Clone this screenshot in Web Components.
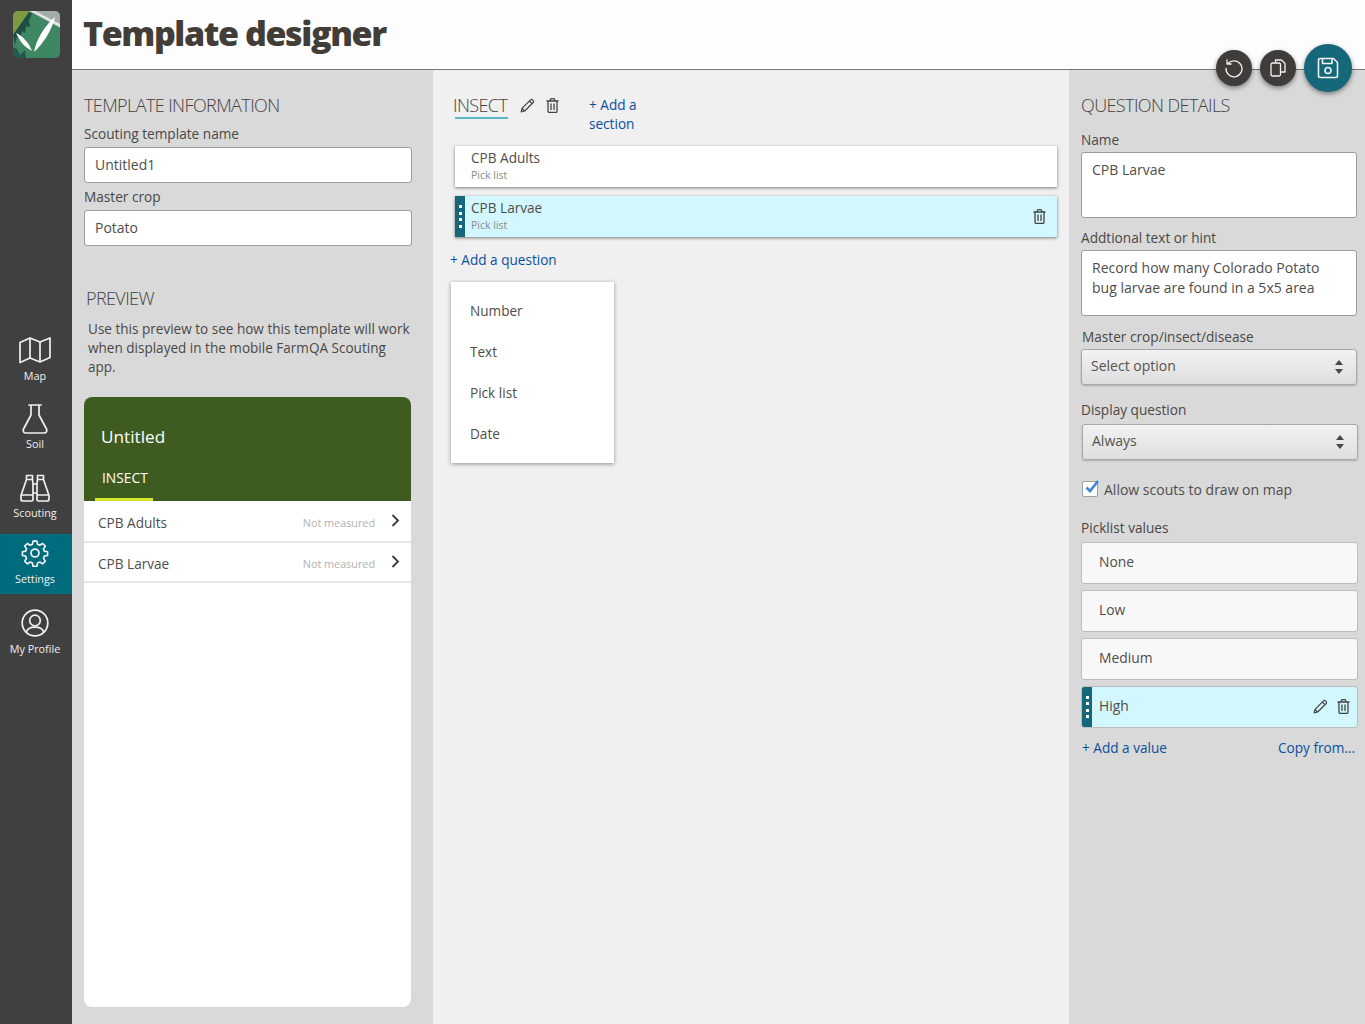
<!DOCTYPE html>
<html lang="en">
<head>
<meta charset="utf-8">
<title>Template designer</title>
<style>
  html, body { margin: 0; height: 100%; }
  body { font-family: "Open Sans", "Liberation Sans", sans-serif; color: #4a4845; overflow: hidden; }
  #app { display: grid; grid-template-columns: 72px 1fr; width: 1365px; height: 1024px; }
  #main { display: grid; grid-template-rows: 70px 1fr; position: relative; min-width: 0; }
  #columns { display: grid; grid-template-columns: 361px 636px 296px; min-height: 0; }
</style>
</head>
<body>
<div id="app">
  <app-sidebar></app-sidebar>
  <div id="main">
    <app-header>Template designer</app-header>
    <div id="columns">
      <template-info></template-info>
      <section-editor></section-editor>
      <question-details></question-details>
    </div>
  </div>
</div>

<script>
const ICONS = {
  map: '<svg width="34" height="28" viewBox="0 0 34 28" fill="none" stroke="currentColor" stroke-width="1.7" stroke-linejoin="round"><path d="M2 6.5 12 2l10 4 10-4v19.5L22 26l-10-4-10 4.500z"/><path d="M12 2v20M22 6v20"/></svg>',
  flask: '<svg width="28" height="32" viewBox="0 0 28 32" fill="none" stroke="currentColor" stroke-width="1.700" stroke-linejoin="round" stroke-linecap="round"><path d="M8 2h12M10 2v10L2.500 26c-1 2 .3 4 2.500 4h18c2.200 0 3.500-2 2.500-4L18 12V2"/></svg>',
  binoculars: '<svg width="30" height="28" viewBox="0 0 30 28" fill="none" stroke="currentColor" stroke-width="1.700" stroke-linejoin="round"><path d="M6.500 1.500h6v4h-6zM17.500 1.500h6v4h-6zM12.500 5.500 13 10v15.500c0 .9-.6 1.500-1.500 1.500H3c-1.300 0-2-.8-2-2v-3.500L6.500 5.500M17.500 5.500 17 10v15.500c0 .9.600 1.500 1.500 1.500H27c1.300 0 2-.8 2-2v-3.500L23.500 5.500M13 10h4M13 19h4M1.500 21h11M17.500 21h11"/></svg>',
  gear: '<svg width="28" height="28" viewBox="0 0 24 24" fill="none" stroke="currentColor" stroke-width="1.500" stroke-linejoin="round"><circle cx="12" cy="12" r="3.400"/><path d="M10.200 1.500h3.600l.6 3 2 .9 2.600-1.700 2.500 2.500-1.700 2.600.8 2 3 .6v3.400l-3 .6-.8 2 1.700 2.600-2.500 2.500-2.600-1.700-2 .9-.6 3h-3.600l-.6-3-2-.9-2.600 1.700-2.500-2.500 1.700-2.600-.8-2-3-.6v-3.400l3-.6.8-2-1.700-2.600 2.500-2.500 2.600 1.700 2-.9z" transform="translate(12 12) scale(.93) translate(-12 -12.500)"/></svg>',
  profile: '<svg width="28" height="28" viewBox="0 0 28 28" fill="none" stroke="currentColor" stroke-width="1.700"><circle cx="14" cy="14" r="12.800"/><circle cx="14" cy="11.500" r="5.300"/><path d="M5.200 23.200c1-3.300 4-5 8.800-5s7.800 1.700 8.800 5"/></svg>',
  pencil: '<svg width="15" height="15" viewBox="0 0 15 15" fill="none" stroke="currentColor" stroke-width="1.200" stroke-linejoin="round"><path d="M1.200 13.800 2 10.300 10.500 1.800a1.300 1.300 0 0 1 1.800 0l.9.900a1.300 1.300 0 0 1 0 1.800L4.700 13zM9.300 3l2.700 2.700M2 10.300 4.700 13"/></svg>',
  trash: '<svg width="13" height="15" viewBox="0 0 13 15" fill="none" stroke="currentColor" stroke-width="1.300"><path d="M.5 3h12M2 3v10.200c0 .7.500 1.200 1.200 1.200h6.600c.7 0 1.200-.5 1.200-1.200V3M4.300 3V1.700c0-.6.400-1 1-1h2.400c.6 0 1 .4 1 1V3M5 5.500v6.500M8 5.500v6.500"/></svg>',
  undo: '<svg width="20" height="20" viewBox="0 0 20 20" fill="none" stroke="currentColor" stroke-width="1.300" stroke-linecap="round" stroke-linejoin="round"><path d="M4 5.500A8 8 0 1 1 2 10.500M3 1.800v4.200h4.200"/></svg>',
  copy: '<svg width="16" height="18" viewBox="0 0 16 18" fill="none" stroke="currentColor" stroke-width="1.300" stroke-linejoin="round"><path d="M5.500 3.500V1h6l3.500 3.500V13h-4"/><rect x="1" y="4" width="9.500" height="13" rx="1.500"/></svg>',
  save: '<svg width="22" height="22" viewBox="0 0 22 22" fill="none" stroke="currentColor" stroke-width="1.600" stroke-linejoin="round"><path d="M1.500 3c0-.8.700-1.500 1.500-1.500h13.500l4 4V19c0 .8-.7 1.500-1.500 1.500H3c-1.300 0-1.500-.7-1.500-1.500z"/><path d="M5.500 1.500v5h9.500v-5"/><circle cx="11" cy="13.500" r="3"/></svg>',
  chevron: '<svg width="9" height="13" viewBox="0 0 9 13" fill="none" stroke="#3c3a38" stroke-width="1.800"><path d="M1.500 1l5.500 5.500L1.500 12"/></svg>'
}

/**
 * Defines a custom element that only renders a fixed shadow tree.
 *
 * @param {string} name - The tag name.
 * @param {string} html - The shadow markup, styles included.
 */
function defineStatic (name, html) {
  const template = document.createElement('template')
  template.innerHTML = html
  customElements.define(name, class extends HTMLElement {
    constructor () {
      super()
      this.attachShadow({ mode: 'open' }).appendChild(template.content.cloneNode(true))
    }
  })
}

customElements.define('nav-item', class extends HTMLElement {
  constructor () {
    super()
    this.attachShadow({ mode: 'open' }).innerHTML = `
      <style>
        :host { display: flex; flex-direction: column; align-items: center; box-sizing: border-box; height: 60px; padding-right: 2px; color: #f0f0f0; font-size: 10.800px; line-height: 15px; }
        :host([active]) { background: #006b7c; }
        :host([tight]) .icon { height: 36px; }
        .icon { height: 37px; display: flex; align-items: center; justify-content: center; padding-top: 1px; box-sizing: border-box; }
      </style>
      <div class="icon">${ICONS[this.getAttribute('icon')]}</div>
      <slot></slot>`
  }
})

defineStatic('app-sidebar', `
  <style>
    :host { display: flex; flex-direction: column; background: #404040; }
    svg.logo { display: block; margin: 11px 0 0 13px; border-radius: 5px; }
    nav { display: flex; flex-direction: column; margin-top: 273px; }
    nav-item:nth-child(2), nav-item:nth-child(3) { margin-top: 9px; }
    nav-item:nth-child(4) { margin-top: 5px; }
    nav-item:nth-child(5) { margin-top: 10px; }
  </style>
  <svg class="logo" width="47" height="47" viewBox="0 0 47 47">
    <rect width="47" height="47" fill="#3f8763"/>
    <path d="M0 0h17L0 24z" fill="#7c9a42"/>
    <path d="M16 0h31v17z" fill="#a3aba7"/>
    <path d="M17 0h5l25 13v3z" fill="#e2e8e3"/>
    <path d="M0 24 16 1l3 2-3 6 1 7-4-1-1 7-3-2-2 9-3-3-2 8z" fill="#1d4f45"/>
    <path d="M0 36l4 2 3 6 5-5 1 8H0z" fill="#25594f"/>
    <path d="M3 22c7 3 13 10 16 18C11 36 6 29 3 22z" fill="#fff"/>
    <path d="M42 6c-3 13-12 27-21 35 2-12 11-27 21-35z" fill="#fff"/>
  </svg>
  <nav>
    <nav-item icon="map">Map</nav-item>
    <nav-item icon="flask" tight>Soil</nav-item>
    <nav-item icon="binoculars" tight>Scouting</nav-item>
    <nav-item icon="gear" active>Settings</nav-item>
    <nav-item icon="profile">My Profile</nav-item>
  </nav>
`)

customElements.define('round-button', class extends HTMLElement {
  constructor () {
    super()
    this.attachShadow({ mode: 'open' }).innerHTML = `
      <style>
        :host { display: flex; align-items: center; justify-content: center; width: 36px; height: 36px; border-radius: 50%; background: #3f3c3a; color: #f2f2f2; box-shadow: 0 2px 5px rgba(0,0,0,.45); }
        :host([primary]) { width: 48px; height: 48px; background: #14687a; }
      </style>
      ${ICONS[this.getAttribute('icon')]}`
  }
})

defineStatic('app-header', `
  <style>
    :host { display: flex; align-items: center; box-sizing: border-box; height: 70px; padding: 0 0 4px 11px; background: #fdfdfd; border-bottom: 1px solid #777; }
    h1 { margin: 0; font-size: 34px; font-weight: 800; color: #423d37; letter-spacing: -1.400px; }
    .actions { position: absolute; top: 44px; right: 13px; display: flex; align-items: center; gap: 8px; z-index: 2; }
  </style>
  <h1><slot></slot></h1>
  <div class="actions">
    <round-button icon="undo"></round-button>
    <round-button icon="copy"></round-button>
    <round-button icon="save" primary></round-button>
  </div>
`)

defineStatic('panel-heading', `
  <style>
    :host { display: block; font-size: 18px; font-weight: 300; line-height: 24px; letter-spacing: -.6px; color: #45423f; }
  </style>
  <slot></slot>
`)

defineStatic('field-label', `
  <style>
    :host { display: block; font-size: 13.650px; line-height: 19px; color: #4a4845; }
  </style>
  <slot></slot>
`)

defineStatic('text-box', `
  <style>
    :host { display: block; box-sizing: border-box; background: #fff; border: 1px solid #9c9c9c; border-radius: 3px; padding: 7px 10px; font-size: 14px; line-height: 20px; color: #4f4d4b; }
  </style>
  <slot></slot>
`)

defineStatic('select-box', `
  <style>
    :host { display: flex; align-items: center; justify-content: space-between; box-sizing: border-box; height: 36px; padding: 0 13px 3px 9px; background: linear-gradient(#f2f2f2, #dedede); border: 1px solid #a8a8a8; border-radius: 3px; box-shadow: 0 1px 2px rgba(0,0,0,.2); font-size: 14px; color: #55534f; }
    .arrows { display: flex; flex-direction: column; gap: 4px; margin-top: 3px; }
    i { display: block; width: 0; border-left: 4.500px solid transparent; border-right: 4.500px solid transparent; }
    i.up { border-bottom: 5px solid #4a4845; }
    i.down { border-top: 5px solid #4a4845; }
  </style>
  <span><slot></slot></span>
  <span class="arrows"><i class="up"></i><i class="down"></i></span>
`)

const GRIP = `<div class="grip"><b></b><b></b><b></b><b></b></div>`
const GRIP_STYLE = `
  .grip { position: absolute; left: 0; top: 0; bottom: 0; width: 10px; background: #14687a; display: flex; flex-direction: column; align-items: center; justify-content: center; gap: 3.500px; }
  .grip b { width: 3px; height: 3px; background: #fff; }
`

customElements.define('question-row', class extends HTMLElement {
  constructor () {
    super()
    const active = this.hasAttribute('active')
    this.attachShadow({ mode: 'open' }).innerHTML = `
      <style>
        :host { display: block; position: relative; box-sizing: border-box; height: 41px; padding: 2px 16px 0; background: #fff; box-shadow: 0 1px 3px rgba(0,0,0,.5); }
        :host([active]) { background: #d2f7ff; }
        .name { font-size: 13.600px; line-height: 20px; color: #4f4d4b; }
        .type { font-size: 10.500px; line-height: 15px; color: #8a8a8a; }
        .trash { position: absolute; right: 11px; top: 13px; color: #444; line-height: 0; }
        ${GRIP_STYLE}
      </style>
      ${active ? GRIP : ''}
      <div class="name"><slot></slot></div>
      <div class="type">Pick list</div>
      ${active ? `<span class="trash">${ICONS.trash}</span>` : ''}`
  }
})

customElements.define('value-row', class extends HTMLElement {
  constructor () {
    super()
    const active = this.hasAttribute('active')
    this.attachShadow({ mode: 'open' }).innerHTML = `
      <style>
        :host { display: flex; align-items: center; justify-content: space-between; position: relative; box-sizing: border-box; height: 42px; padding: 0 7px 4px 17px; background: #f8f8f8; border: 1px solid #bdbdbd; border-radius: 3px; font-size: 13.850px; color: #4f4d4b; overflow: hidden; }
        :host([active]) { background: #d2f7ff; }
        .tools { display: flex; align-items: center; gap: 9px; color: #444; margin-top: 2px; }
        ${GRIP_STYLE}
      </style>
      ${active ? GRIP : ''}
      <span><slot></slot></span>
      ${active ? `<span class="tools">${ICONS.pencil}${ICONS.trash}</span>` : ''}`
  }
})

customElements.define('preview-row', class extends HTMLElement {
  constructor () {
    super()
    this.attachShadow({ mode: 'open' }).innerHTML = `
      <style>
        :host { display: flex; align-items: center; box-sizing: border-box; height: 42px; padding: 2px 11px 0 14px; border-bottom: 2px solid #e8e8e8; font-size: 13.600px; color: #4f4d4b; }
        .name { flex: 1; }
        .status { font-size: 10.800px; color: #b2b2b2; margin-right: 16px; }
        svg { display: block; margin-top: -3px; }
      </style>
      <span class="name"><slot></slot></span>
      <span class="status">Not measured</span>
      ${ICONS.chevron}`
  }
})

defineStatic('preview-card', `
  <style>
    :host { display: block; height: 610px; margin-right: 1px; background: #fff; border-radius: 8px; overflow: hidden; }
    header { position: relative; height: 104px; background: #3f5c20; color: #fff; box-sizing: border-box; padding: 27px 0 0 17px; }
    .title { font-size: 17.200px; line-height: 26px; font-weight: 500; }
    .tab { position: absolute; left: 11px; bottom: 0; width: 58px; height: 34px; box-sizing: border-box; border-bottom: 3px solid #d9e52a; padding-left: 7px; font-size: 13.800px; line-height: 22px; }
    preview-row:last-child { height: 40px; }
  </style>
  <header>
    <div class="title">Untitled</div>
    <div class="tab">INSECT</div>
  </header>
  <preview-row>CPB Adults</preview-row>
  <preview-row>CPB Larvae</preview-row>
`)

defineStatic('template-info', `
  <style>
    :host { display: block; box-sizing: border-box; padding: 23px 21px 0 12px; background: #d9d9d9; }
    field-label { margin-top: 7px; }
    .crop { margin-top: 4px; }
    text-box { height: 36px; margin-top: 4px; }
    .preview { margin: 40px 0 0 2px; }
    p { margin: 10px 0 20px 4px; font-size: 13.550px; line-height: 19px; color: #4a4845; }
  </style>
  <panel-heading>TEMPLATE INFORMATION</panel-heading>
  <field-label>Scouting template name</field-label>
  <text-box>Untitled1</text-box>
  <field-label class="crop">Master crop</field-label>
  <text-box>Potato</text-box>
  <panel-heading class="preview">PREVIEW</panel-heading>
  <p>Use this preview to see how this template will work when displayed in the mobile FarmQA Scouting app.</p>
  <preview-card></preview-card>
`)

defineStatic('type-menu', `
  <style>
    :host { display: block; box-sizing: border-box; width: 163px; height: 181px; padding-top: 8px; background: #fff; box-shadow: 0 1px 4px rgba(0,0,0,.4); font-size: 13.600px; color: #4f4d4b; }
    div { height: 41px; line-height: 41px; padding-left: 19px; }
  </style>
  <div>Number</div>
  <div>Text</div>
  <div>Pick list</div>
  <div>Date</div>
`)

defineStatic('section-editor', `
  <style>
    :host { display: block; box-sizing: border-box; padding: 23px 12px 0 20px; background: #f0f0f0; }
    .top { display: flex; align-items: flex-start; height: 53px; }
    .tab { position: relative; width: 55px; flex: none; }
    .tab::after { content: ""; position: absolute; left: 2px; right: 0; top: 24px; height: 2px; background: #5ab5c5; }
    .tools { display: flex; align-items: center; gap: 11px; margin: 5px 0 0 12px; color: #444; }
    a { color: #0b4f9e; font-size: 13.600px; line-height: 19px; text-decoration: none; }
    .add-section { width: 60px; flex: none; margin: 2px 0 0 30px; }
    question-row { margin: 0 0 9px 2px; }
    .add-question { display: block; margin: 13px 0 0 -3px; }
    type-menu { margin: 13px 0 0 -2px; }
  </style>
  <div class="top">
    <panel-heading class="tab">INSECT</panel-heading>
    <div class="tools">${ICONS.pencil}${ICONS.trash}</div>
    <a class="add-section">+ Add a section</a>
  </div>
  <question-row>CPB Adults</question-row>
  <question-row active>CPB Larvae</question-row>
  <a class="add-question">+ Add a question</a>
  <type-menu></type-menu>
`)

defineStatic('question-details', `
  <style>
    :host { display: block; box-sizing: border-box; padding: 23px 8px 0 12px; background: #d9d9d9; }
    field-label { height: 19px; }
    text-box { height: 66px; }
    .check { display: flex; align-items: center; gap: 6px; height: 20px; margin: 19px 0 0 0; font-size: 14px; color: #4f4d4b; }
    .box { position: relative; width: 16px; height: 16px; margin-left: 1px; box-sizing: border-box; background: #fff; border: 1px solid #a0a0a0; border-radius: 2px; }
    .box svg { position: absolute; left: 1px; top: -3px; }
    value-row { margin: 0 -1px 6px 0; }
    .links { display: flex; justify-content: space-between; margin: 10px 2px 0 1px; }
    a { color: #0b4f9e; font-size: 13.600px; line-height: 19px; text-decoration: none; }
  </style>
  <panel-heading>QUESTION DETAILS</panel-heading>
  <field-label style="margin-top:13px;margin-bottom:3px">Name</field-label>
  <text-box>CPB Larvae</text-box>
  <field-label style="margin-top:10px;margin-bottom:3px">Addtional text or hint</field-label>
  <text-box>Record how many Colorado Potato bug larvae are found in a 5x5 area</text-box>
  <field-label style="margin:11px 0 3px 1px">Master crop/insect/disease</field-label>
  <select-box>Select option</select-box>
  <field-label style="margin-top:15px;margin-bottom:5px">Display question</field-label>
  <select-box style="margin-left:1px;margin-right:-1px">Always</select-box>
  <div class="check">
    <span class="box"><svg width="16" height="16" viewBox="0 0 16 16" fill="none" stroke="#3f86d8" stroke-width="2.600"><path d="M2.500 8.500 6 12l8-10"/></svg></span>
    Allow scouts to draw on map
  </div>
  <field-label style="margin:19px 0 5px">Picklist values</field-label>
  <value-row>None</value-row>
  <value-row>Low</value-row>
  <value-row>Medium</value-row>
  <value-row active>High</value-row>
  <div class="links"><a>+ Add a value</a><a>Copy from...</a></div>
`)
</script>
</body>
</html>
